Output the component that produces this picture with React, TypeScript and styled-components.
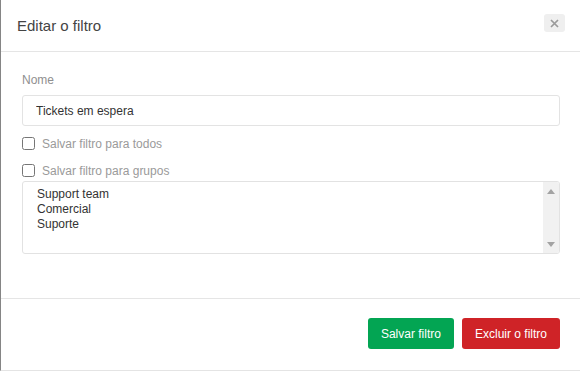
import React from "react";
import styled, { createGlobalStyle } from "styled-components";

const GlobalStyle = createGlobalStyle`
  html, body { margin: 0; padding: 0; background: #ffffff; }
  body { font-family: "Liberation Sans", Arial, sans-serif; }
  * { box-sizing: border-box; }
`;

const Modal = styled.div`
  width: 580px;
  height: 371px;
  display: flex;
  flex-direction: column;
  background: #ffffff;
  border-left: 1px solid #858585;
  border-bottom: 1px solid #e4e4e4;
`;

const Header = styled.div`
  height: 52px;
  flex: none;
  display: flex;
  align-items: center;
  justify-content: space-between;
  padding: 0 15px 0 16px;
  border-bottom: 1px solid #e5e5e5;
`;

const Title = styled.h4`
  margin: 0;
  font-size: 15px;
  font-weight: normal;
  color: #444;
  line-height: 18px;
`;

const CloseButton = styled.button`
  width: 21px;
  height: 18px;
  margin-top: -5px;
  padding: 0;
  border: none;
  border-radius: 3px;
  background: #efefef;
  display: flex;
  align-items: center;
  justify-content: center;
  cursor: pointer;
`;

const Body = styled.div`
  flex: 1;
  padding: 21px 20px 0 21px;
  display: flex;
  flex-direction: column;
`;

const FieldLabel = styled.label`
  font-size: 12px;
  line-height: 15px;
  color: #8f8f8f;
  margin-bottom: 7px;
`;

const TextInput = styled.input`
  height: 31px;
  width: 100%;
  border: 1px solid #e3e3e3;
  border-radius: 3px;
  padding: 0 13px;
  font-family: "Liberation Sans", Arial, sans-serif;
  font-size: 12px;
  color: #333;
  outline: none;
`;

const CheckRow = styled.label<{ $top: number }>`
  display: flex;
  align-items: center;
  gap: 7px;
  height: 15px;
  margin-top: ${(p) => p.$top}px;
  font-size: 12px;
  color: #9a9a9a;
  input {
    margin: 0;
    width: 13px;
    height: 13px;
  }
`;

const ListBox = styled.div`
  margin-top: 3px;
  height: 73px;
  border: 1px solid #e2e2e2;
  border-radius: 3px;
  display: flex;
  overflow: hidden;
`;

const Options = styled.div`
  flex: 1;
  padding: 5px 14px;
  display: flex;
  flex-direction: column;
`;

const Option = styled.div`
  font-size: 12px;
  line-height: 15px;
  color: #333;
`;

const ScrollTrack = styled.div`
  width: 16px;
  background: #f1f1f1;
  display: flex;
  flex-direction: column;
  justify-content: space-between;
  align-items: center;
  padding: 7px 0 6px;
`;

const Footer = styled.div`
  height: 72px;
  flex: none;
  border-top: 1px solid #e5e5e5;
  display: flex;
  justify-content: flex-end;
  align-items: flex-start;
  gap: 8px;
  padding: 19px 20px 0 0;
`;

const Button = styled.button<{ $variant: "save" | "delete" }>`
  height: 31px;
  padding: 0 13px;
  border: none;
  border-radius: 3px;
  font-family: "Liberation Sans", Arial, sans-serif;
  font-size: 12px;
  color: #ffffff;
  background: ${(p) => (p.$variant === "save" ? "#03a553" : "#cf2327")};
  cursor: pointer;
`;

const Arrow = ({ down }: { down?: boolean }) => (
  <svg width="8" height="5" viewBox="0 0 8 5">
    <path d={down ? "M0 0 L8 0 L4 5 Z" : "M4 0 L8 5 L0 5 Z"} fill="#a3a3a3" />
  </svg>
);

export default function App() {
  return (
    <>
      <GlobalStyle />
      <Modal>
        <Header>
          <Title>Editar o filtro</Title>
          <CloseButton aria-label="Fechar">
            <svg width="9" height="9" viewBox="0 0 9 9">
              <path d="M1 1 L8 8 M8 1 L1 8" stroke="#9a9a9a" strokeWidth="1.7" />
            </svg>
          </CloseButton>
        </Header>
        <Body>
          <FieldLabel>Nome</FieldLabel>
          <TextInput defaultValue="Tickets em espera" />
          <CheckRow $top={10}>
            <input type="checkbox" />
            Salvar filtro para todos
          </CheckRow>
          <CheckRow $top={12}>
            <input type="checkbox" />
            Salvar filtro para grupos
          </CheckRow>
          <ListBox>
            <Options>
              <Option>Support team</Option>
              <Option>Comercial</Option>
              <Option>Suporte</Option>
            </Options>
            <ScrollTrack>
              <Arrow />
              <Arrow down />
            </ScrollTrack>
          </ListBox>
        </Body>
        <Footer>
          <Button $variant="save">Salvar filtro</Button>
          <Button $variant="delete">Excluir o filtro</Button>
        </Footer>
      </Modal>
    </>
  );
}
